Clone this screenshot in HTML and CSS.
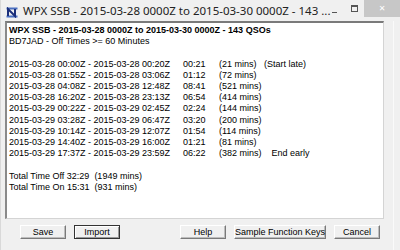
FILE: index.html
```html
<!DOCTYPE html>
<html lang="en">
<head>
    <meta charset="UTF-8">
    <title>WPX SSB - Off Times</title>
    <link rel="stylesheet" href="styles.css">
</head>
<body>
    <div class="window">
        <div class="titlebar">
            <svg class="app-icon" width="12" height="11" viewBox="0 0 12 11">
                <rect x="0.5" y="0.5" width="11" height="2" fill="#4a6fc0"/>
                <rect x="0.5" y="8.5" width="11" height="2" fill="#4a6fc0"/>
                <polyline points="2,9 2,2 9,9 9,2" fill="none" stroke="#1c2f7a" stroke-width="2"/>
            </svg>
            <span class="title">WPX SSB - 2015-03-28 0000Z to 2015-03-30 0000Z - 143 ...</span>
            <div class="caption-buttons">
                <span class="cap-min"></span>
                <span class="cap-max"></span>
                <span class="cap-close">&#x2715;</span>
            </div>
        </div>

        <div class="client">
            <div class="report">
                <div class="line bold">WPX SSB - 2015-03-28 0000Z to 2015-03-30 0000Z - 143 QSOs</div>
                <div class="line">BD7JAD - Off Times &gt;= 60 Minutes</div>
                <div class="line blank"></div>
                <div class="rows">
                    <span>2015-03-28 00:00Z - 2015-03-28 00:20Z</span><span>00:21</span><span>(21 mins)   (Start late)</span>
                    <span>2015-03-28 01:55Z - 2015-03-28 03:06Z</span><span>01:12</span><span>(72 mins)</span>
                    <span>2015-03-28 04:08Z - 2015-03-28 12:48Z</span><span>08:41</span><span>(521 mins)</span>
                    <span>2015-03-28 16:20Z - 2015-03-28 23:13Z</span><span>06:54</span><span>(414 mins)</span>
                    <span>2015-03-29 00:22Z - 2015-03-29 02:45Z</span><span>02:24</span><span>(144 mins)</span>
                    <span>2015-03-29 03:28Z - 2015-03-29 06:47Z</span><span>03:20</span><span>(200 mins)</span>
                    <span>2015-03-29 10:14Z - 2015-03-29 12:07Z</span><span>01:54</span><span>(114 mins)</span>
                    <span>2015-03-29 14:40Z - 2015-03-29 16:00Z</span><span>01:21</span><span>(81 mins)</span>
                    <span>2015-03-29 17:37Z - 2015-03-29 23:59Z</span><span>06:22</span><span>(382 mins)    End early</span>
                </div>
                <div class="line blank"></div>
                <div class="line">Total Time Off 32:29  (1949 mins)</div>
                <div class="line">Total Time On 15:31  (931 mins)</div>
            </div>

            <div class="button-row">
                <div class="group">
                    <button class="btn">Save</button>
                    <button class="btn default">Import</button>
                </div>
                <div class="group">
                    <button class="btn">Help</button>
                    <button class="btn wide">Sample Function Keys</button>
                    <button class="btn">Cancel</button>
                </div>
            </div>
        </div>
    </div>
</body>
</html>
```

FILE: styles.css
```css
body {
    margin: 0;
    background: #f0f0f0;
}
.window {
    width: 400px;
    height: 250px;
    background: #f0f0f0;
    box-sizing: border-box;
    border-left: 1px solid #d9d9d9;
    display: flex;
    flex-direction: column;
    overflow: hidden;
}
.titlebar {
    height: 21px;
    display: flex;
    align-items: flex-start;
    background: #f0f0f0;
}
.app-icon {
    margin: 7px 0 0 5px;
}
.title {
    margin: 3px 0 0 5px;
    font-family: "Noto Sans", sans-serif;
    font-size: 11.5px;
    color: #222;
    white-space: nowrap;
}
.caption-buttons {
    margin-left: auto;
    display: flex;
    align-items: flex-start;
}
.cap-min {
    width: 5px;
    height: 1px;
    background: #555;
    margin: 12px 14px 0 0;
}
.cap-max {
    width: 5px;
    height: 4px;
    border: 1px solid #555;
    border-top-width: 2px;
    margin: 5px 6px 0 0;
}
.cap-close {
    width: 36px;
    height: 17px;
    background: #c7c7c7;
    color: #fff;
    font-family: "DejaVu Sans", sans-serif;
    font-size: 8px;
    line-height: 17px;
    text-align: center;
}
.client {
    flex: 1;
    display: flex;
    flex-direction: column;
    padding: 0 9px 0 4px;
    border-right: 1px solid #fafafa;
    margin-right: 6px;
}
.report {
    height: 198px;
    box-sizing: border-box;
    background: #fff;
    border-top: 2px solid #7a7a7a;
    border-left: 2px solid #8a8a8a;
    border-right: 1px solid #d4d4d4;
    border-bottom: 1px solid #d4d4d4;
    padding: 2px 0 0 2px;
    font-family: "Liberation Sans", Arial, sans-serif;
    font-size: 9px;
    line-height: 11.2px;
    color: #000;
}
.line {
    white-space: pre;
}
.line.blank {
    height: 11.2px;
}
.bold {
    font-weight: bold;
}
.rows {
    display: grid;
    grid-template-columns: 174px 36px auto;
    white-space: pre;
}
.button-row {
    display: flex;
    justify-content: space-between;
    padding: 6px 4px 0 15px;
}
.group {
    display: flex;
    gap: 8px;
}
.btn {
    width: 46px;
    height: 14px;
    padding: 0;
    margin: 0;
    background: #f0f0f0;
    border: 1px solid;
    border-color: #fff #7a7a7a #7a7a7a #fff;
    box-shadow: inset -1px -1px 0 #bdbdbd;
    font-family: "Liberation Sans", Arial, sans-serif;
    font-size: 9px;
    line-height: 12px;
    color: #000;
    white-space: nowrap;
}
.btn.default {
    border-color: #333;
    box-shadow: inset 1px 1px 0 #fff, inset -1px -1px 0 #9a9a9a;
}
.btn.wide {
    width: 92px;
}
```
